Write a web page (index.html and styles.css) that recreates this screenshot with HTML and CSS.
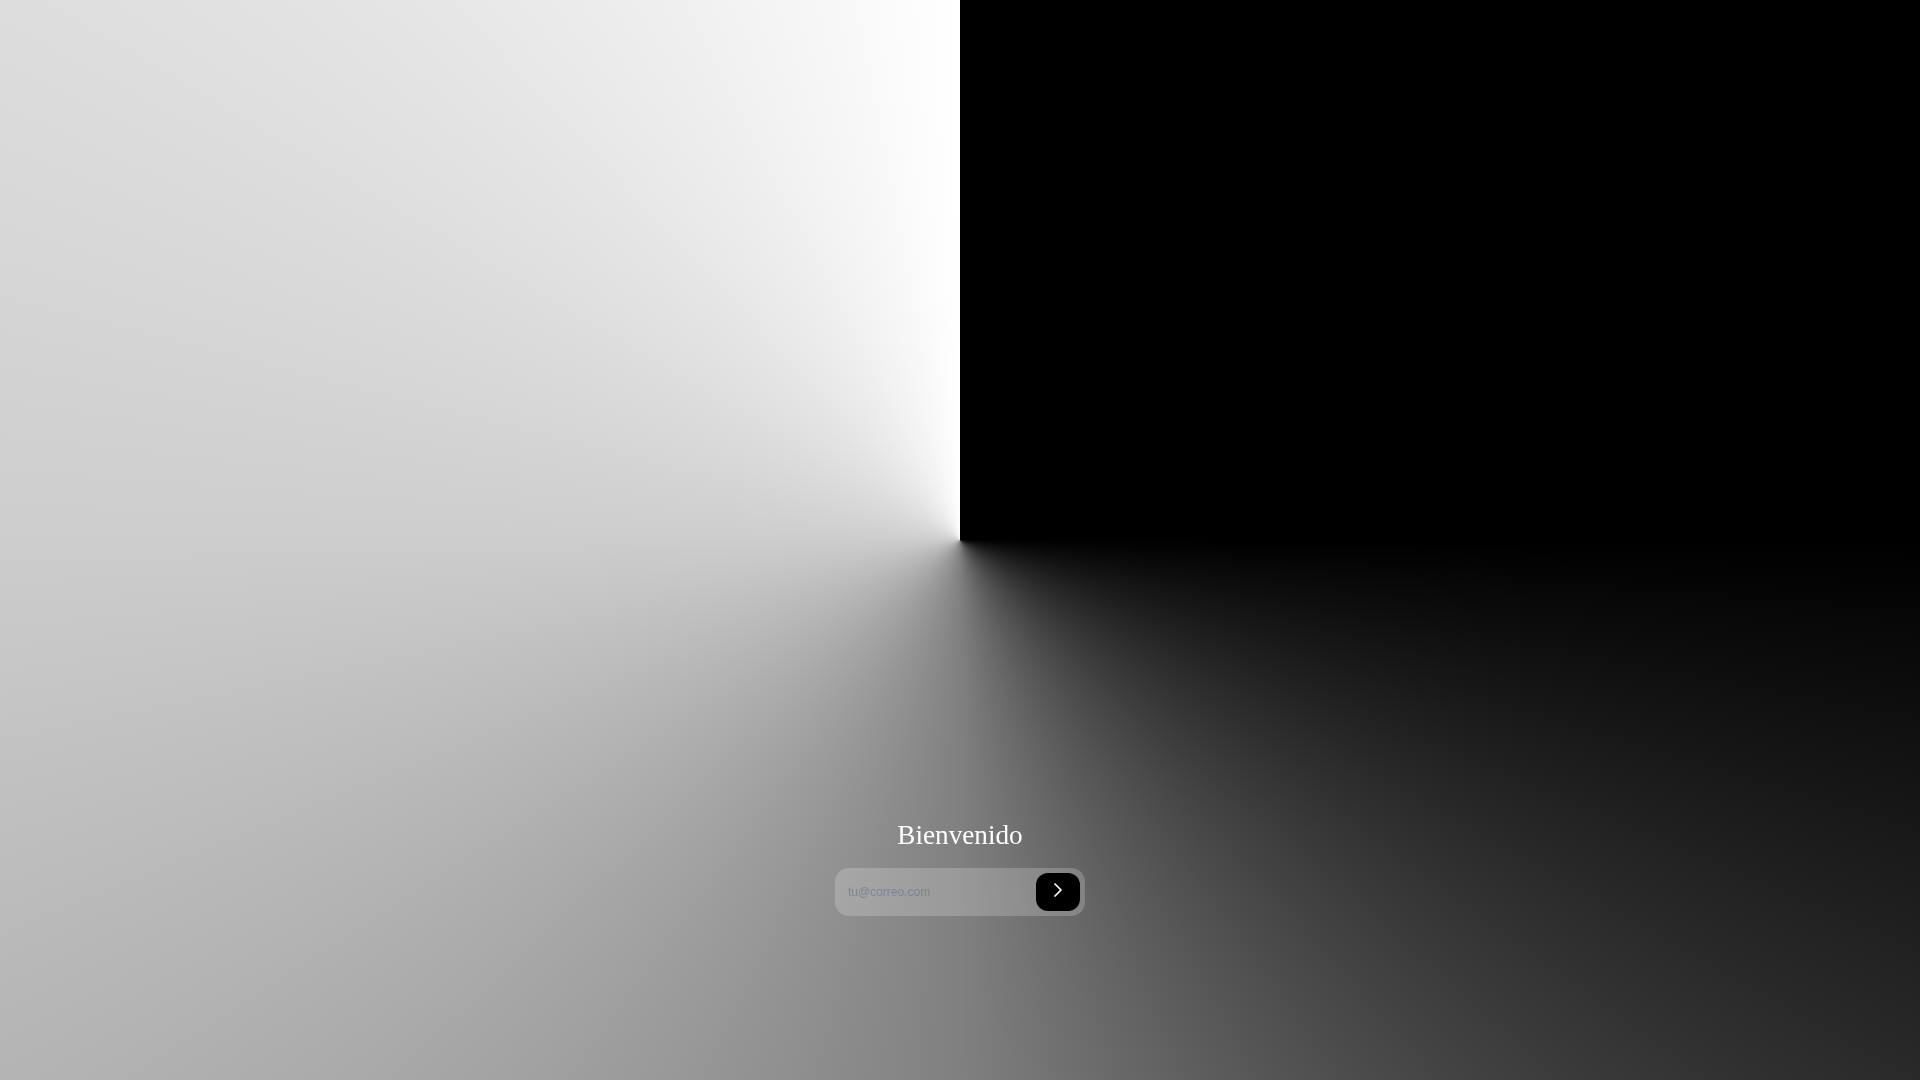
FILE: index.html
```html
<!DOCTYPE html>
<html lang="es">
<head>
    <meta charset="UTF-8">
    <meta name="viewport" content="width=device-width, initial-scale=1.0">
    <title>Bienvenido</title>
    <link rel="stylesheet" href="styles.css">
</head>
<body>
    <main class="container">
        <h1 class="title">Bienvenido</h1>
        <form class="login-form">
            <input class="email-input" type="email" placeholder="tu@correo.com">
            <button class="submit-button" type="button" aria-label="Continuar">
                <svg class="chevron" width="24" height="24" viewBox="0 0 24 24" fill="none" stroke="currentColor" stroke-width="1.75" stroke-linecap="round" stroke-linejoin="round">
                    <path d="m9 18 6-6-6-6"></path>
                </svg>
            </button>
        </form>
    </main>
</body>
</html>
```

FILE: styles.css
```css
body {
    margin: 0;
    height: 100vh;
    overflow: hidden;
    background: conic-gradient(#000 0deg, #000 90deg, #808080 180deg, #cdcdcd 270deg, #fff 360deg);
}

.container {
    height: 100%;
    box-sizing: border-box;
    padding-bottom: 164px;
    display: flex;
    flex-direction: column;
    justify-content: flex-end;
    align-items: center;
    will-change: transform;
}

.title {
    margin: 0 0 17px;
    font-family: "Liberation Serif", serif;
    font-size: 27.2px;
    font-weight: 400;
    line-height: 32px;
    color: #fff;
}

.login-form {
    width: 250px;
    height: 48px;
    box-sizing: border-box;
    padding: 5px;
    display: flex;
    align-items: center;
    background: rgba(255, 255, 255, 0.2);
    border-radius: 14px;
}

.email-input {
    flex: 1;
    min-width: 0;
    padding: 0 8px;
    border: none;
    outline: none;
    background: transparent;
    font-family: "Liberation Sans", sans-serif;
    font-size: 12px;
    color: #fff;
}

.email-input::placeholder {
    color: #7b8499;
}

.submit-button {
    width: 44px;
    height: 38px;
    padding: 0;
    display: flex;
    align-items: center;
    justify-content: center;
    border: none;
    border-radius: 12px;
    background: #000;
    color: #fff;
}

.chevron {
    margin-bottom: 4px;
}
```
